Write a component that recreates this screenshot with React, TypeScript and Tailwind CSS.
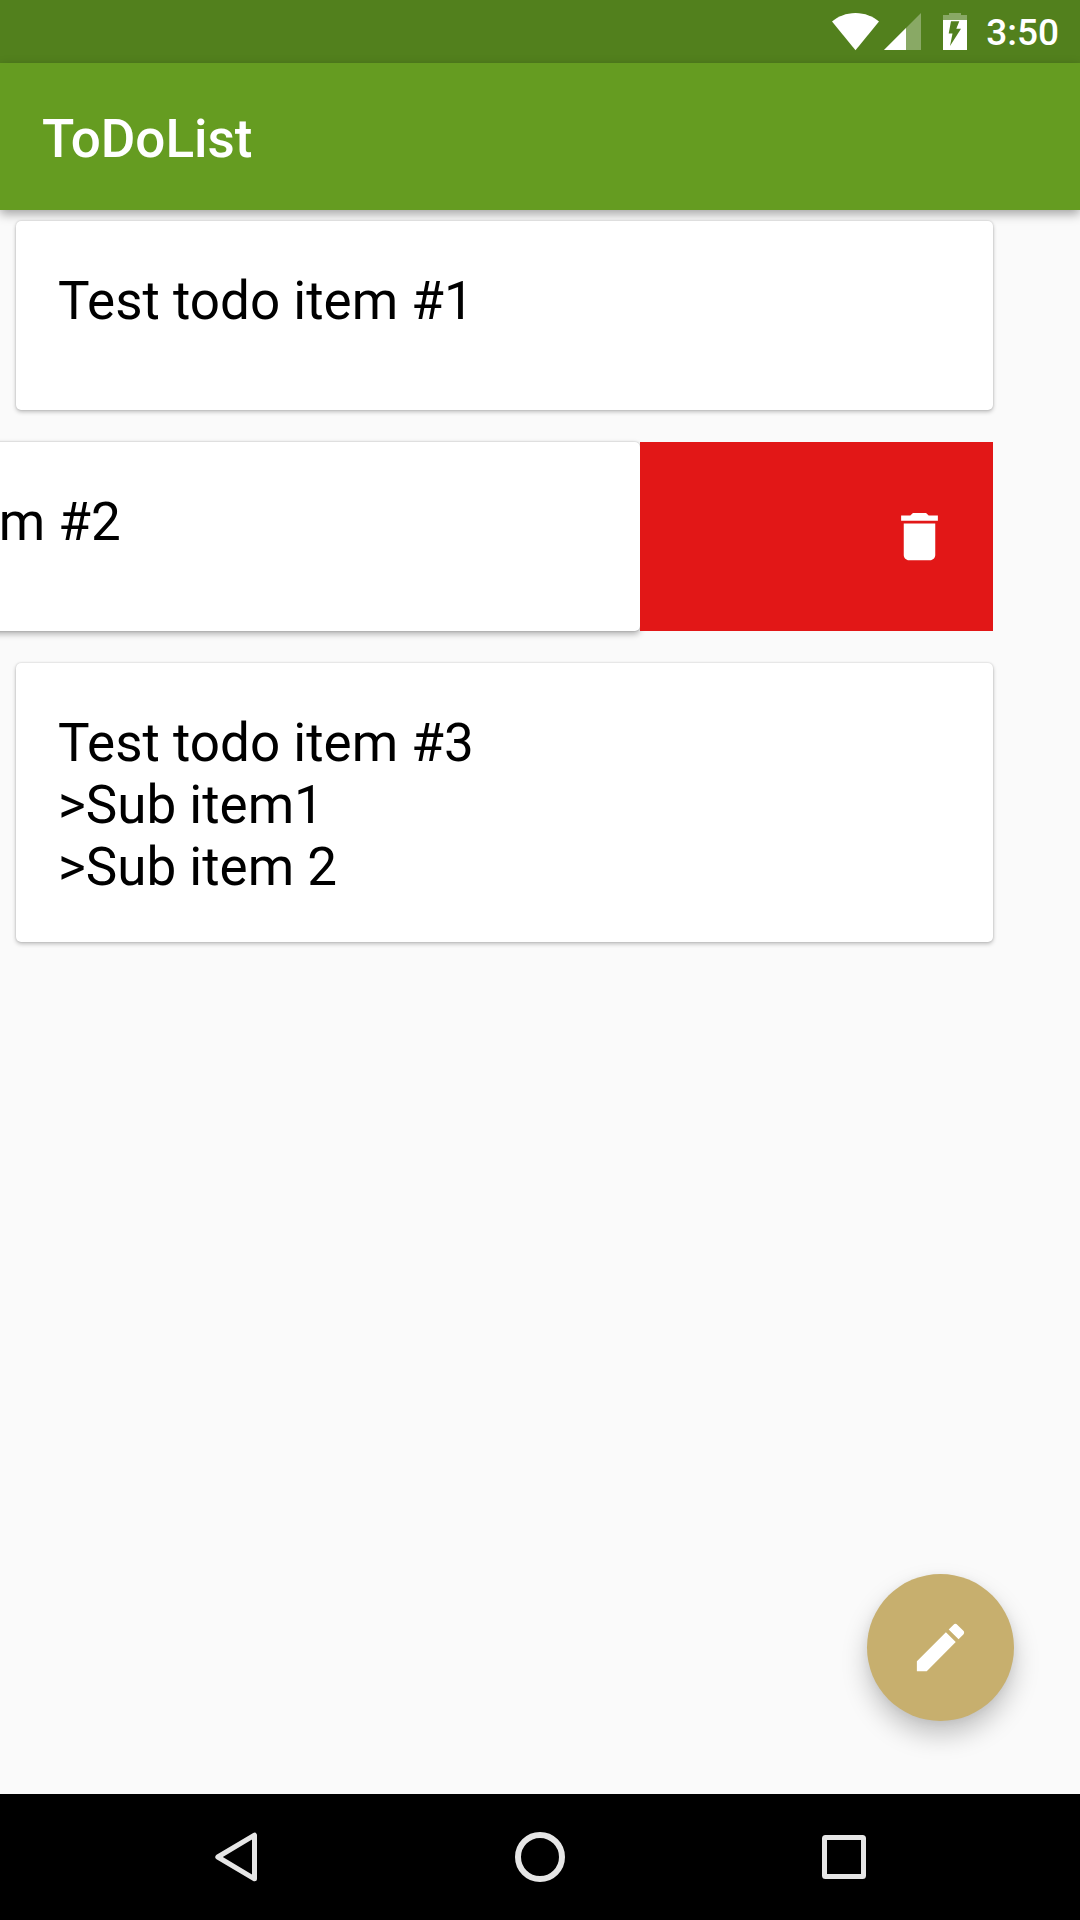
import type { ReactNode } from 'react';

type Todo = { id: number; lines: string[]; swiped?: boolean };

const todos: Todo[] = [
  { id: 1, lines: ['Test todo item #1'] },
  { id: 2, lines: ['Test todo item #2'], swiped: true },
  { id: 3, lines: ['Test todo item #3', '>Sub item1', '>Sub item 2'] },
];

function StatusBar() {
  return (
    <div className="flex h-[63px] shrink-0 items-center justify-end bg-[#52801d] pt-px pr-[21px] text-white">
      <svg className="mr-[5px] h-[38px] w-[47px]" viewBox="0 0 47 38" fill="currentColor" aria-label="Wi-Fi">
        <path d="M23.5 37.2 0 8.5C6 3.5 14 0 23.5 0S41 3.5 47 8.5Z" />
      </svg>
      <svg className="mr-[22px] h-[38px] w-[37px]" viewBox="0 0 37 38" fill="currentColor" aria-label="Signal">
        <path d="M37 0V37H0Z" fillOpacity="0.32" />
        <path d="M22 15V37H0Z" />
      </svg>
      <svg className="mr-[19px] h-[38px] w-6" viewBox="0 0 24 38" fill="currentColor" aria-label="Battery charging">
        <path d="M6 -1H18V2H24V7H0V2H6Z" fillOpacity="0.32" />
        <path
          fillRule="evenodd"
          d="M0 7H24V37H0ZM8 8.2 5.7 20.5H9.5L7 33 18 15.8H13.3L16.3 8.2Z"
        />
      </svg>
      <time className="pt-[2px] text-[37px] leading-[44px] font-medium">3:50</time>
    </div>
  );
}

function TodoCard({ lines, raised }: { lines: string[]; raised?: boolean }) {
  return (
    <article
      className={
        'min-h-[189px] w-full shrink-0 rounded-[5px] bg-white px-[42px] pt-[49px] pb-11 text-[53px] leading-[62px] text-black ' +
        (raised
          ? 'shadow-[0_3px_6px_rgba(0,0,0,0.3),0_0_2px_rgba(0,0,0,0.25)]'
          : 'shadow-[0_2px_4px_rgba(0,0,0,0.24),0_0_2px_rgba(0,0,0,0.18)]')
      }
    >
      {lines.map((line) => (
        <p key={line}>{line}</p>
      ))}
    </article>
  );
}

function NavButton({ label, children }: { label: string; children: ReactNode }) {
  return (
    <button type="button" aria-label={label} className="flex flex-1 items-center justify-center">
      <svg
        className="h-[50px] w-[50px]"
        viewBox="0 0 50 50"
        fill="none"
        stroke="#e6e6e6"
        strokeWidth="5"
        strokeLinejoin="round"
      >
        {children}
      </svg>
    </button>
  );
}

export default function App() {
  return (
    <div className="flex min-h-screen flex-col overflow-hidden bg-[#fafafa] font-[Roboto,sans-serif]">
      <StatusBar />
      <header className="flex h-[147px] shrink-0 items-center bg-[#659c21] px-[42px] pt-1 shadow-[0_4px_10px_rgba(0,0,0,0.35)]">
        <h1 className="text-[53px] leading-[62px] font-medium text-white">ToDoList</h1>
      </header>

      <main className="relative flex-1 pt-[11px] pr-[87px] pb-[73px] pl-4">
        <ul className="flex flex-col gap-8">
          {todos.map((todo) => (
            <li key={todo.id} className="flex justify-end">
              <TodoCard lines={todo.lines} raised={todo.swiped} />
              {todo.swiped && (
                <button
                  type="button"
                  aria-label="Delete"
                  className="flex w-[353px] shrink-0 items-center justify-end bg-[#e21717] pr-[42px] text-white"
                >
                  <svg className="h-[63px] w-[63px]" viewBox="0 0 24 24" fill="currentColor">
                    <path d="M6 19c0 1.1.9 2 2 2h8c1.1 0 2-.9 2-2V7H6v12zM19 4h-3.5l-1-1h-5l-1 1H5v2h14V4z" />
                  </svg>
                </button>
              )}
            </li>
          ))}
        </ul>

        <button
          type="button"
          aria-label="Add item"
          className="absolute right-[66px] bottom-[73px] flex h-[147px] w-[147px] items-center justify-center rounded-full bg-[#c7af6e] text-white shadow-[0_14px_26px_rgba(0,0,0,0.22),0_2px_10px_rgba(0,0,0,0.06)]"
        >
          <svg className="h-[63px] w-[63px]" viewBox="0 0 24 24" fill="currentColor">
            <path d="M3 17.25V21h3.75L17.81 9.94l-3.75-3.75L3 17.25zM20.71 7.04c.39-.39.39-1.02 0-1.41l-2.34-2.34c-.39-.39-1.02-.39-1.41 0l-1.83 1.83 3.75 3.75 1.83-1.83z" />
          </svg>
        </button>
      </main>

      <nav className="flex h-[126px] shrink-0 bg-black px-[84px]">
        <NavButton label="Back">
          <path d="M43.5 3.2V46.8L6.8 25Z" />
        </NavButton>
        <NavButton label="Home">
          <circle cx="25" cy="25" r="22" strokeWidth="6" />
        </NavButton>
        <NavButton label="Recents">
          <rect x="5.5" y="5.5" width="39" height="39" rx="1" />
        </NavButton>
      </nav>
    </div>
  );
}
